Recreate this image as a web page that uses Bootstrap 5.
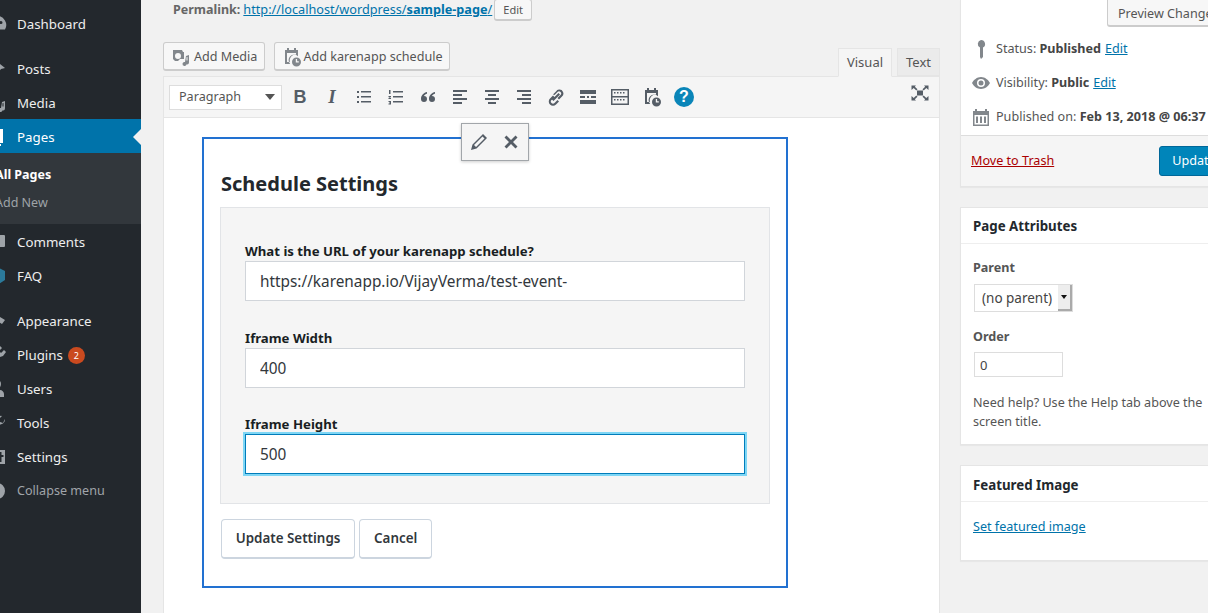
<!DOCTYPE html>
<html lang="en">
<head>
    <meta charset="UTF-8">
    <meta name="viewport" content="width=device-width, initial-scale=1.0">
    <title>Edit Page</title>
    <link href="https://cdn.jsdelivr.net/npm/bootstrap@5.3.0/dist/css/bootstrap.min.css" rel="stylesheet">
    <style>
        html, body { height: 613px; overflow: hidden; }
        body { background: #f1f1f1; color: #444; font: 12.6px/1.4 "Noto Sans", sans-serif; }
        a { color: #0073aa; }
        svg { display: block; flex: none; fill: currentColor; }

        .wp-side { width: 141px; background: #23282d; flex: none; overflow: hidden; position: relative; }
        .wp-row { height: 34px; color: #eee; font-size: 13.3px; }
        .wp-row svg { width: 20px; height: 20px; margin: 0 10px 0 -13px; color: #9ea3a8; }
        .wp-row.first { margin-top: 7px; }
        .wp-row.sep { margin-top: 11px; }
        .wp-row.on { background: #0073aa; color: #fff; position: relative; margin-top: -1px; padding-top: 2px; }
        .wp-row.on svg { color: #fff; }
        .wp-row.on::after { content: ""; position: absolute; right: 0; top: 10px; border: 8px solid transparent; border-right-color: #f1f1f1; border-left: 0; }
        .wp-row.after { height: 35px; padding-top: 1px; }
        .wp-row.muted { color: #a0a5aa; font-size: 12.6px; }
        .wp-sub { background: #32373c; height: 71px; padding-top: 8px; font-size: 12.5px; }
        .wp-sub div { height: 28px; line-height: 28px; margin-left: -5px; color: #9ea3a8; }
        .wp-sub div.cur { color: #fff; font-weight: 700; }
        .wp-count { width: 17px; height: 17px; border-radius: 50%; background: #ca4a1f; color: #fff; font-size: 9px; line-height: 17px; text-align: center; margin-left: 5px; }

        .wp-main { padding-left: 22px; width: 799px; flex: none; }
        .wp-link-row { height: 19px; padding-left: 10px; margin-bottom: 23px; white-space: nowrap; }
        .wp-link-row b { color: #666; font-size: 12.5px; margin-right: 3px; }
        .wp-link-row a { font-size: 12.7px; }
        .wp-mini { border: 1px solid #ccc; border-bottom-width: 2px; background: #f7f7f7; border-radius: 3px; font-size: 11px; color: #555; padding: 0 8px; height: 22px; line-height: 19px; margin-left: 2px; }
        .wp-tools-left { margin-bottom: 5px; }
        .wp-media { border: 1px solid #ccc; border-bottom-width: 2px; background: #f7f7f7; border-radius: 3px; font-size: 12.6px; color: #555; height: 29px; padding: 1px 7px 0; white-space: nowrap; }
        .wp-media svg { width: 20px; height: 20px; margin-right: 3px; color: #82878c; }
        .wp-media.tight { padding-right: 6px; margin-left: 1px; }
        .wp-media.tight svg { margin-right: 1px; }
        .wp-tab { border: 1px solid #e5e5e5; font-size: 13px; color: #555; height: 28px; line-height: 27px; text-align: center; background: #ebebeb; }
        .wp-tab.on { height: 29px; background: #f5f5f5; border-bottom-color: #f5f5f5; margin-bottom: -1px; position: relative; }
        .wp-frame { border: 1px solid #e5e5e5; background: #fff; height: 540px; }
        .wp-bar { height: 41px; background: #f5f5f5; border-bottom: 1px solid #e5e5e5; padding: 0 3px 0 5px; }
        .wp-picker { width: 113px; height: 25px; background: #fff; border: 1px solid #ddd; margin-right: 2px; color: #555; }
        .wp-picker select { appearance: none; border: 0; background: transparent; color: #555; flex: 1; min-width: 0; padding-left: 9px; font-size: 12.6px; outline: 0; }
        .wp-picker i { border: 5px solid transparent; border-top: 6px solid #555; border-bottom: 0; margin-right: 6px; }
        .wp-tool { width: 32px; height: 32px; color: #555d66; }
        .wp-tool svg { width: 20px; height: 20px; }
        .wp-tool .glyph-b { font: 700 18px "Liberation Sans", sans-serif; }
        .wp-tool .glyph-i { font: italic 700 19px "Liberation Serif", serif; }
        .wp-help { width: 20px; height: 20px; border-radius: 50%; background: #0a85b8; color: #fff; font: 700 16px/20px "Liberation Sans", sans-serif; text-align: center; }

        .wp-canvas { padding: 19px 0 0 38px; }
        .wp-block { width: 586px; height: 451px; border: 2px solid #2271d1; position: relative; padding: 0 16px; }
        .wp-float { position: absolute; left: 257px; top: -16px; width: 68px; height: 38px; background: #f5f5f5; border: 1px solid #a2a6aa; box-shadow: 0 1px 3px rgba(0,0,0,.2); color: #555d66; padding: 0 7px 0 7px; }
        .wp-float svg { width: 20px; height: 20px; }
        .wp-title { font-size: 20px; font-weight: 700; color: #23282d; line-height: 28px; padding-top: 31px; margin: 0 0 9px 1px; }
        .wp-panel { width: 550px; height: 297px; background: #f5f5f5; border: 1px solid #e2e4e7; padding: 33px 24px 0; }
        .wp-panel label { display: block; font-size: 13.2px; font-weight: 700; color: #191e23; line-height: 20px; margin: 0; }
        .wp-panel input { display: block; height: 40px; border: 1px solid #d1d5da; border-radius: 0; padding: 0 14px; font-size: 15.35px; color: #32373c; background: #fff; margin-bottom: 26.5px; }
        .wp-panel input.hot { border-color: #007cba; box-shadow: 0 0 0 2px #7ed6f5; }
        .wp-act { gap: 4px; margin: 15px 0 0 1px; }
        .wp-act button { height: 40px; background: #fff; border: 1px solid #ccd5df; border-bottom-width: 2px; border-radius: 4px; font-size: 13.4px; font-weight: 600; color: #32373c; padding: 0 14px; }
        .wp-act button:first-child { width: 134px; padding: 0; }

        .wp-rail { margin-left: 20px; width: 300px; flex: none; }
        .wp-box { background: #fff; border: 1px solid #e5e5e5; margin-bottom: 20px; box-shadow: 0 1px 1px rgba(0,0,0,.04); }
        .wp-box h2 { font-size: 13.3px; font-weight: 700; color: #23282d; height: 36px; line-height: 36px; padding-left: 12px; margin: 0; border-bottom: 1px solid #eee; }
        .wp-pub { border-top: 0; height: 187px; }
        .wp-preview { margin-left: 146px; margin-bottom: 5px; height: 27px; width: 154px; border: 1px solid #ccc; border-bottom-width: 2px; border-top: 0; border-radius: 0 0 0 3px; background: #f7f7f7; line-height: 28px; color: #555; padding-left: 10px; white-space: nowrap; }
        .wp-stat { height: 34px; padding-left: 10px; white-space: nowrap; color: #555; }
        .wp-stat svg { width: 20px; height: 20px; color: #82878c; margin-right: 5px; }
        .wp-stat b { color: #444; }
        .wp-stat a { margin-left: 4px; }
        .wp-foot { height: 51px; margin-top: 1px; background: #f5f5f5; border-top: 1px solid #ddd; padding-left: 10px; }
        .wp-foot a { color: #a00; }
        .wp-update { margin-left: 105px; width: 80px; height: 30px; background: #0085ba; border: 1px solid #006799; border-radius: 3px; color: #fff; font-size: 12.6px; padding: 0 0 0 12px; text-align: left; white-space: nowrap; }
        .wp-attr { height: 238px; padding: 0; }
        .wp-attr p { margin: 0; }
        .wp-attr .lab { font-weight: 700; color: #555; line-height: 18px; padding: 15px 0 0 12px; }
        .wp-attr .lab.order-lab { padding-top: 16px; }
        .wp-parent { margin: 7px 0 0 13px; width: 99px; height: 28px; border: 1px solid #ddd; background: #fff; }
        .wp-parent select { appearance: none; border: 0; background: transparent; flex: 1; min-width: 0; padding-left: 7px; font-size: 13.5px; color: #444; outline: 0; }
        .wp-parent i { display: flex; align-items: center; justify-content: center; width: 14px; height: 100%; background: #ededed; border-right: 2px solid #aaa; border-bottom: 2px solid #aaa; }
        .wp-parent i::after { content: ""; border: 3px solid transparent; border-top: 4px solid #111; border-bottom: 0; }
        .wp-order { display: block; margin: 6px 0 0 13px; width: 89px; height: 25px; border: 1px solid #ddd; padding: 0 5px; font-size: 13px; color: #444; }
        .wp-attr .wp-note { line-height: 19px; padding: 16px 0 0 12px; width: 245px; color: #555; }
        .wp-feat { height: 96px; }
        .wp-box.wp-feat h2 { padding-top: 1px; }
        .wp-feat p { margin: 0; padding: 16px 0 0 12px; }
    </style>
</head>
<body class="d-flex">
    <svg width="0" height="0" class="position-absolute">
        <symbol id="i-media" viewBox="0 0 20 20"><path d="M2 3h9l1 2h1v7H9l-2 2H4l-2-2zm5 3a3 3 0 1 0 0 6 3 3 0 0 0 0-6zm8 3 3-1v7.500a2 2 0 1 1-1.500-2V10l-1 .3V17a2 2 0 1 1-1.500-2z"/></symbol>
        <symbol id="i-cal" viewBox="0 0 20 20"><path d="M5 1h2v2h5V1h2v2h2v6.200a5.500 5.500 0 0 0-7.800 7.800H3V3h2zm0 5v9h2.800A6 6 0 0 1 14 7.500V6zm9.500 4.500a4.500 4.500 0 1 1 0 9 4.500 4.500 0 0 1 0-9zm-.7 1.500v3.500h3v-1.300h-1.700V12z"/></symbol>
    </svg>

    <div class="wp-side">
        <div class="wp-row first d-flex align-items-center"><svg viewBox="0 0 20 20"><path d="M10 2a9 9 0 0 0-8 13.500h16A9 9 0 0 0 10 2zM6 7a1.500 1.500 0 1 1 0 3 1.500 1.500 0 0 1 0-3zm4-2.500a1.500 1.500 0 1 1 0 3 1.500 1.500 0 0 1 0-3zM14 7a1.500 1.500 0 1 1 0 3 1.500 1.500 0 0 1 0-3z"/></svg>Dashboard</div>
        <div class="wp-row sep d-flex align-items-center"><svg viewBox="0 0 20 20"><path d="M9 2l9 7-4 1-4 5-2-3-6 6 5-6.500-3-2 5-3.500z"/></svg>Posts</div>
        <div class="wp-row d-flex align-items-center"><svg viewBox="0 0 20 20"><use href="#i-media"/></svg>Media</div>
        <div class="wp-row on d-flex align-items-center"><svg viewBox="0 0 20 20"><path d="M4 2h12v14H4zM2 17h12v2H2z"/></svg>Pages</div>
        <div class="wp-sub">
            <div class="cur">All Pages</div>
            <div>Add New</div>
        </div>
        <div class="wp-row after d-flex align-items-center"><svg viewBox="0 0 20 20"><path d="M3 3h14a1 1 0 0 1 1 1v10a1 1 0 0 1-1 1h-5l-4 4v-4H3a1 1 0 0 1-1-1V4a1 1 0 0 1 1-1z"/></svg>Comments</div>
        <div class="wp-row d-flex align-items-center"><svg viewBox="0 0 20 20"><path fill="#2b7a9b" d="M10 1l8 4v9l-8 5-8-5V5zm0 3a3 3 0 1 0 0 6 3 3 0 0 0 0-6z"/></svg>FAQ</div>
        <div class="wp-row sep d-flex align-items-center"><svg viewBox="0 0 20 20"><path d="M6 2l12 7-3 4-12-7zM3 8l6 4-3 3z"/></svg>Appearance</div>
        <div class="wp-row d-flex align-items-center"><svg viewBox="0 0 20 20"><path d="M13 1l2 2-3 3 2 2 3-3 2 2-3 4-3 1-5-5 1-3zM6 11l3 3-5 5-2-2z"/></svg>Plugins<span class="wp-count">2</span></div>
        <div class="wp-row d-flex align-items-center"><svg viewBox="0 0 20 20"><path d="M10 1a4 4 0 0 1 4 4c0 3-2 5-4 5S6 8 6 5a4 4 0 0 1 4-4zm-7 17v-3c0-2 2-4 4-4h6c2 0 4 2 4 4v3z"/></svg>Users</div>
        <div class="wp-row d-flex align-items-center"><svg viewBox="0 0 20 20"><path d="M18 6a5 5 0 0 1-7 5l-6 7-3-3 7-6a5 5 0 0 1 6-6l-3 3 1 3 3 1z"/></svg>Tools</div>
        <div class="wp-row d-flex align-items-center"><svg viewBox="0 0 20 20"><path fill-rule="evenodd" d="M2 3h16v14H2zm12.500 2h-2v3h-2v2h2v5h2v-5h2V8h-2z"/></svg>Settings</div>
        <div class="wp-row muted d-flex align-items-center"><svg viewBox="0 0 20 20"><path fill-rule="evenodd" d="M10 2a8 8 0 1 1 0 16 8 8 0 0 1 0-16zm3 3-5 5 5 5z"/></svg>Collapse menu</div>
    </div>

    <div class="wp-main">
        <div class="wp-link-row d-flex align-items-center">
            <b>Permalink:</b><a href="#">http://localhost/wordpress/<strong>sample-page</strong>/</a>
            <span class="wp-mini">Edit</span>
        </div>
        <div class="d-flex align-items-end">
            <div class="wp-tools-left d-flex gap-2 me-auto">
                <span class="wp-media d-flex align-items-center"><svg><use href="#i-media"/></svg>Add Media</span>
                <span class="wp-media tight d-flex align-items-center"><svg><use href="#i-cal"/></svg>Add karenapp schedule</span>
            </div>
            <div class="wp-tab on" style="width:54px;margin-right:5px">Visual</div>
            <div class="wp-tab" style="width:43px">Text</div>
        </div>
        <div class="wp-frame">
            <div class="wp-bar d-flex align-items-center">
                <div class="wp-picker d-flex align-items-center">
                    <select aria-label="Format"><option>Paragraph</option></select><i></i>
                </div>
                <div class="wp-tool d-flex align-items-center justify-content-center"><span class="glyph-b">B</span></div>
                <div class="wp-tool d-flex align-items-center justify-content-center"><span class="glyph-i">I</span></div>
                <div class="wp-tool d-flex align-items-center justify-content-center"><svg viewBox="0 0 20 20"><path d="M3 4h2v2H3zm4 0h10v1.500H7zM3 9h2v2H3zm4 0h10v1.500H7zM3 14h2v2H3zm4 0h10v1.500H7z"/></svg></div>
                <div class="wp-tool d-flex align-items-center justify-content-center"><svg viewBox="0 0 20 20"><path d="M7 4h10v1.500H7zm0 5h10v1.500H7zm0 5h10v1.500H7zM3 3h1.500v4H3zm-.5 6H5v1L3.500 11H5v1H2.500v-1L4 10H2.500zm0 5H5v3.500H2.500v-1H4v-.3H3v-.8h1V15H2.500z"/></svg></div>
                <div class="wp-tool d-flex align-items-center justify-content-center"><svg viewBox="0 0 20 20"><path d="M9 5C6 5.500 3 8 3 12a3 3 0 1 0 3-3c.3-1 1.500-2 3-2.300zm8 0c-3 .5-6 3-6 7a3 3 0 1 0 3-3c.3-1 1.500-2 3-2.300z"/></svg></div>
                <div class="wp-tool d-flex align-items-center justify-content-center"><svg viewBox="0 0 20 20"><path d="M3 3h14v2H3zm0 4h9v2H3zm0 4h14v2H3zm0 4h9v2H3z"/></svg></div>
                <div class="wp-tool d-flex align-items-center justify-content-center"><svg viewBox="0 0 20 20"><path d="M3 3h14v2H3zm3 4h8v2H6zm-3 4h14v2H3zm3 4h8v2H6z"/></svg></div>
                <div class="wp-tool d-flex align-items-center justify-content-center"><svg viewBox="0 0 20 20"><path d="M3 3h14v2H3zm5 4h9v2H8zm-5 4h14v2H3zm5 4h9v2H8z"/></svg></div>
                <div class="wp-tool d-flex align-items-center justify-content-center"><svg viewBox="0 0 20 20"><path d="M13 2.500a4 4 0 0 1 3 7l-3 3-1.500-1.500 3-3a2 2 0 0 0-3-3l-3 3L7 7.500l3-3a4 4 0 0 1 3-2zM12.500 6 14 7.500 7.500 14 6 12.500zM7 8.500 8.500 10l-3 3a2 2 0 0 0 3 3l3-3 1.500 1.500-3 3a4 4 0 0 1-6-6z"/></svg></div>
                <div class="wp-tool d-flex align-items-center justify-content-center"><svg viewBox="0 0 20 20"><path d="M2 3h16v4H2zm0 6h5v2H2zm7 0h2v2H9zm4 0h5v2h-5zM2 13h16v4H2z"/></svg></div>
                <div class="wp-tool d-flex align-items-center justify-content-center"><svg viewBox="0 0 20 20"><path fill-rule="evenodd" d="M1 2h18v16H1zm1.500 1.500V9h15V3.500zm0 7V16.500h15V10.500zM4 5h1.500v1.500H4zm3 0h1.500v1.500H7zm3 0h1.500v1.500H10zm3 0h1.500v1.500H13zM4 12h1.500v1.500H4zm3 0h1.500v1.500H7zm3 0h1.500v1.500H10zm3 0h1.500v1.500H13z"/></svg></div>
                <div class="wp-tool d-flex align-items-center justify-content-center"><svg><use href="#i-cal"/></svg></div>
                <div class="wp-tool d-flex align-items-center justify-content-center"><div class="wp-help">?</div></div>
                <div class="wp-tool d-flex align-items-center justify-content-center ms-auto mb-2"><svg viewBox="0 0 20 20"><path d="M7 7.500h6v5H7zM1.500 2.500H6L4.800 3.700 7.500 6.300 6.300 7.500 3.700 4.900 1.500 7zm17 0V7l-2.200-2.100-2.600 2.600-1.200-1.200 2.700-2.600L14 2.500zm-17 15V13l2.200 2.100 2.600-2.600 1.200 1.200-2.700 2.600L6 17.500zm17 0H14l1.200-1.200-2.700-2.600 1.200-1.200 2.600 2.600 2.200-2.100z"/></svg></div>
            </div>
            <div class="wp-canvas">
                <div class="wp-block">
                    <div class="wp-float d-flex align-items-center justify-content-between">
                        <svg viewBox="0 0 20 20"><path d="M14 2l4 4-10.500 10.500L2 18l1.500-5.500zM5 13l2 2 8.500-8.500-2-2z"/></svg>
                        <svg viewBox="0 0 20 20"><path d="M5.500 3.500 10 8l4.500-4.500 2 2L12 10l4.500 4.500-2 2L10 12l-4.500 4.500-2-2L8 10 3.500 5.500z"/></svg>
                    </div>
                    <h3 class="wp-title">Schedule Settings</h3>
                    <div class="wp-panel">
                        <label for="sched-url">What is the URL of your karenapp schedule?</label>
                        <input id="sched-url" class="form-control" value="https://karenapp.io/VijayVerma/test-event-">
                        <label for="sched-w">Iframe Width</label>
                        <input id="sched-w" class="form-control" value="400">
                        <label for="sched-h">Iframe Height</label>
                        <input id="sched-h" class="form-control hot" value="500">
                    </div>
                    <div class="wp-act d-flex">
                        <button type="button">Update Settings</button>
                        <button type="button">Cancel</button>
                    </div>
                </div>
            </div>
        </div>
    </div>

    <div class="wp-rail">
        <div class="wp-box wp-pub">
            <div class="wp-preview">Preview Changes</div>
            <div class="wp-stat d-flex align-items-center"><svg viewBox="0 0 20 20"><path d="M10 1a4 4 0 0 1 2 7.500V18l-2 2-1-2V8.500A4 4 0 0 1 10 1z"/></svg>Status:&nbsp;<b>Published</b><a href="#">Edit</a></div>
            <div class="wp-stat d-flex align-items-center"><svg viewBox="0 0 20 20"><path fill-rule="evenodd" d="M10 4c4 0 7.500 3 9 6-1.500 3-5 6-9 6s-7.500-3-9-6c1.500-3 5-6 9-6zm0 2a4 4 0 1 0 0 8 4 4 0 0 0 0-8zm0 1.500a2.500 2.500 0 1 1 0 5 2.500 2.500 0 0 1 0-5z"/></svg>Visibility:&nbsp;<b>Public</b><a href="#">Edit</a></div>
            <div class="wp-stat d-flex align-items-center"><svg viewBox="0 0 20 20"><path fill-rule="evenodd" d="M4 2h2v2h8V2h2v2h2v15H2V4h2zm-.5 6v9.500h13V8zM5 9.500h2v6.500H5zm4 0h2v6.500H9zm4 0h2v6.500h-2z"/></svg>Published on:&nbsp;<b>Feb 13, 2018 @ 06:37</b><a href="#">Edit</a></div>
            <div class="wp-foot d-flex align-items-center">
                <a href="#">Move to Trash</a>
                <button type="button" class="wp-update">Update</button>
            </div>
        </div>
        <div class="wp-box wp-attr">
            <h2>Page Attributes</h2>
            <p class="lab">Parent</p>
            <div class="wp-parent d-flex">
                <select aria-label="Parent"><option>(no parent)</option></select><i></i>
            </div>
            <p class="lab order-lab">Order</p>
            <input class="wp-order" value="0" aria-label="Order">
            <p class="wp-note">Need help? Use the Help tab above the screen title.</p>
        </div>
        <div class="wp-box wp-feat">
            <h2>Featured Image</h2>
            <p><a href="#">Set featured image</a></p>
        </div>
    </div>
</body>
</html>
